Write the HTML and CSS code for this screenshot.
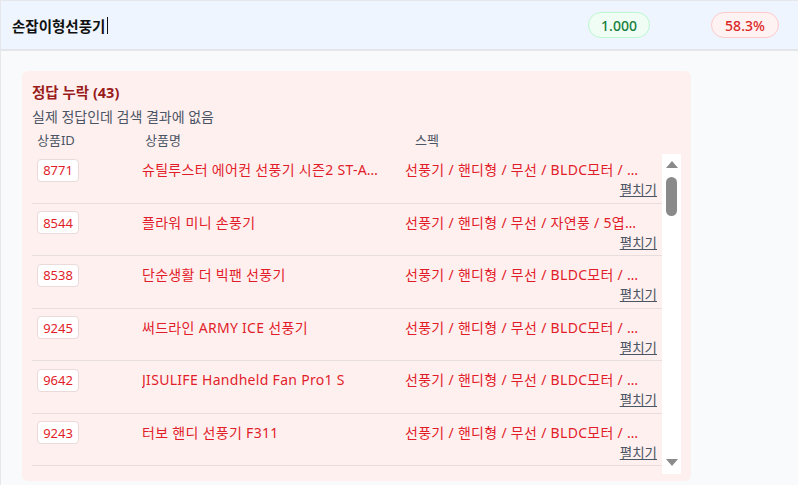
FILE: index.html
```html
<!DOCTYPE html>
<html lang="ko">
<head>
<meta charset="utf-8">
<title>검색 평가</title>
<link rel="stylesheet" href="styles.css">
</head>
<body>
<div class="app">
  <header class="query-bar">
    <div class="query">손잡이형선풍기<span class="caret"></span></div>
    <span class="pill pill-green">1.000</span>
    <span class="pill pill-red">58.3%</span>
  </header>
  <main class="content">
    <section class="card">
      <h2 class="card-title">정답 누락 (43)</h2>
      <p class="card-sub">실제 정답인데 검색 결과에 없음</p>
      <div class="thead">
        <span>상품ID</span><span>상품명</span><span>스펙</span>
      </div>
      <div class="scroller">
        <div class="list">
          <div class="row">
            <div class="c-id"><span class="id">8771</span></div>
            <div class="c-name">슈틸루스터 에어컨 선풍기 시즌2 ST-AC2000 휴대용</div>
            <div class="c-spec"><div class="spec">선풍기 / 핸디형 / 무선 / BLDC모터 / 5단풍량 / 냉각</div><a class="more">펼치기</a></div>
          </div>
          <div class="row">
            <div class="c-id"><span class="id">8544</span></div>
            <div class="c-name">플라워 미니 손풍기</div>
            <div class="c-spec"><div class="spec">선풍기 / 핸디형 / 무선 / 자연풍 / 5엽날개 / 충전식</div><a class="more">펼치기</a></div>
          </div>
          <div class="row">
            <div class="c-id"><span class="id">8538</span></div>
            <div class="c-name">단순생활 더 빅팬 선풍기</div>
            <div class="c-spec"><div class="spec">선풍기 / 핸디형 / 무선 / BLDC모터 / 5단풍량 / 충전식</div><a class="more">펼치기</a></div>
          </div>
          <div class="row">
            <div class="c-id"><span class="id">9245</span></div>
            <div class="c-name">써드라인 ARMY ICE 선풍기</div>
            <div class="c-spec"><div class="spec">선풍기 / 핸디형 / 무선 / BLDC모터 / 3단풍량 / 충전식</div><a class="more">펼치기</a></div>
          </div>
          <div class="row">
            <div class="c-id"><span class="id">9642</span></div>
            <div class="c-name">JISULIFE Handheld Fan Pro1 S</div>
            <div class="c-spec"><div class="spec">선풍기 / 핸디형 / 무선 / BLDC모터 / 100단풍량 / 충전식</div><a class="more">펼치기</a></div>
          </div>
          <div class="row">
            <div class="c-id"><span class="id">9243</span></div>
            <div class="c-name">터보 핸디 선풍기 F311</div>
            <div class="c-spec"><div class="spec">선풍기 / 핸디형 / 무선 / BLDC모터 / 5단풍량 / 충전식</div><a class="more">펼치기</a></div>
          </div>
          <div class="row">
            <div class="c-id"><span class="id">9120</span></div>
            <div class="c-name">모노큐브 핸디 선풍기</div>
            <div class="c-spec"><div class="spec">선풍기 / 핸디형 / 무선 / BLDC모터 / 4단풍량 / 충전식</div><a class="more">펼치기</a></div>
          </div>
        </div>
        <div class="scrollbar" aria-hidden="true">
          <span class="arrow-up"></span>
          <span class="thumb"></span>
          <span class="arrow-down"></span>
        </div>
      </div>
    </section>
  </main>
</div>
</body>
</html>
```

FILE: styles.css
```css
* { box-sizing: border-box; }
html, body { margin: 0; padding: 0; }
body {
  font-family: "Noto Sans", "Noto Sans CJK KR", sans-serif;
  background: #f9fafb;
  color: #111827;
  height: 485px;
  overflow: hidden;
}
.app {
  border-left: 1px solid #e5e7eb;
  min-height: 485px;
}
.query-bar {
  display: flex;
  align-items: center;
  height: 51px;
  padding: 0 19px 0 11px;
  background: #eef5ff;
  border-top: 1px solid #e5e7eb;
  border-bottom: 2px solid #e3e5e8;
}
.query {
  flex: 1;
  font-size: 14.5px;
  font-weight: 600;
  color: #111;
  display: flex;
  align-items: center;
}
.caret {
  display: inline-block;
  width: 1px;
  height: 17px;
  background: #111;
  margin-left: 2px;
}
.pill {
  display: inline-flex;
  align-items: center;
  justify-content: center;
  height: 26px;
  border-radius: 13px;
  font-size: 14px;
  font-weight: 500;
  border: 1px solid;
}
.pill-green {
  width: 62px;
  color: #15803d;
  background: #f0fdf4;
  border-color: #bbf7d0;
  margin-right: 61px;
}
.pill-red {
  width: 68px;
  color: #dc2626;
  background: #fef2f2;
  border-color: #fecaca;
}
.content {
  padding: 20px 0 0 21px;
}
.card {
  width: 669px;
  height: 410px;
  background: #fff0f0;
  border-radius: 6px;
  padding: 10px 10px 8px 10px;
}
.card-title {
  margin: 0;
  font-size: 14.5px;
  font-weight: 700;
  line-height: 22px;
  color: #991b1b;
}
.card-sub {
  margin: 4px 0 0;
  font-size: 14px;
  line-height: 20px;
  color: #4b5563;
}
.thead {
  display: grid;
  grid-template-columns: 108px 270px 1fr;
  padding-left: 5px;
  font-size: 13px;
  line-height: 20px;
  color: #4b5563;
  margin-top: 3px;
}
.scroller {
  display: flex;
  margin-top: 4px;
  height: 320px;
}
.list {
  flex: 1;
  min-width: 0;
  overflow: hidden;
}
.list .row:first-child { margin-top: -3px; }
.scrollbar {
  width: 19px;
  flex: none;
  background: #ffffff;
  display: flex;
  flex-direction: column;
  align-items: center;
  padding: 7px 0 8px;
}
.arrow-up {
  width: 0;
  height: 0;
  border-left: 6.5px solid transparent;
  border-right: 6.5px solid transparent;
  border-bottom: 7px solid #8a8a8a;
}
.thumb {
  width: 11px;
  height: 39px;
  border-radius: 6px;
  background: #8a8a8a;
  margin-top: 9px;
}
.arrow-down {
  margin-top: auto;
  width: 0;
  height: 0;
  border-left: 6.5px solid transparent;
  border-right: 6.5px solid transparent;
  border-top: 7px solid #8a8a8a;
}
.row {
  display: grid;
  grid-template-columns: 110px 263px 1fr;
  height: 52.5px;
  border-bottom: 1px solid #e9dede;
  padding-top: 7px;
}
.c-id { padding-left: 5px; }
.id {
  display: inline-flex;
  align-items: center;
  justify-content: center;
  width: 42px;
  height: 23px;
  background: #ffffff;
  border: 1px solid #eadada;
  border-radius: 4px;
  font-size: 13px;
  color: #e11d2a;
}
.c-name {
  font-size: 14px;
  letter-spacing: 0.3px;
  color: #e11d2a;
  line-height: 24px;
  white-space: nowrap;
  overflow: hidden;
  text-overflow: ellipsis;
  padding-right: 19px;
}
.c-spec {
  display: flex;
  flex-direction: column;
  align-items: flex-end;
  padding-right: 5px;
  min-width: 0;
}
.spec {
  width: 100%;
  font-size: 14px;
  letter-spacing: 0.3px;
  line-height: 24px;
  color: #e11d2a;
  white-space: nowrap;
  overflow: hidden;
  text-overflow: ellipsis;
  padding-right: 14px;
}
.more {
  font-size: 13.5px;
  line-height: 17px;
  color: #4b5563;
  text-decoration: underline;
}
```
